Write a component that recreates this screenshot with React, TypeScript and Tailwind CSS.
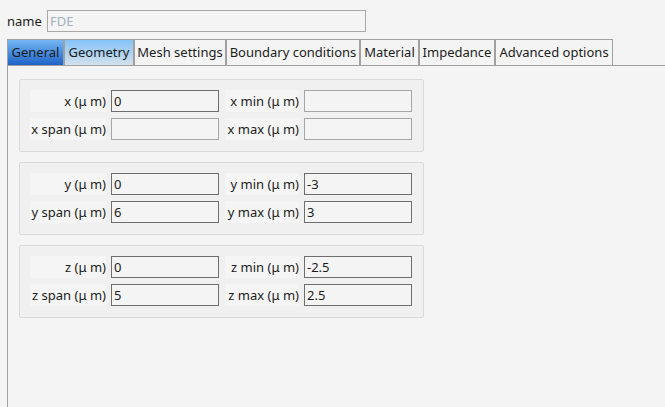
import React from 'react'

const tabs = [
  { name: 'General', w: 'w-[57px]', cls: 'bg-gradient-to-b from-[#74b6f4] to-[#1d63c7]' },
  { name: 'Geometry', w: 'w-[70px]', cls: 'bg-gradient-to-b from-[#84c2f8] to-[#d2e1ec]' },
  { name: 'Mesh settings', w: 'w-[92px]', cls: 'bg-[#f4f4f4]' },
  { name: 'Boundary conditions', w: 'w-[134px]', cls: 'bg-[#f4f4f4]' },
  { name: 'Material', w: 'w-[59px]', cls: 'bg-[#f4f4f4]' },
  { name: 'Impedance', w: 'w-[76px]', cls: 'bg-[#f4f4f4]' },
  { name: 'Advanced options', w: 'w-[118px]', cls: 'bg-[#f4f4f4]' },
]

const groups = [
  { a: 'x', vals: ['', '', '', ''] },
  { a: 'y', vals: ['0', '-3', '6', '3'] },
  { a: 'z', vals: ['0', '-2.5', '5', '2.5'] },
]

const Field = ({ value, dim }: { value: string; dim?: boolean }) => (
  <div
    className={`w-[108px] h-[22px] border bg-[#f4f4f4] px-[2px] leading-[20px] ${
      dim ? 'border-[#a6a6a6]' : 'border-[#6e6e6e]'
    }`}
  >
    {value}
  </div>
)

const Label = ({ text, w }: { text: string; w: string }) => (
  <div className={`${w} h-[22px] bg-[#f5f5f5] text-right leading-[22px] whitespace-nowrap`}>{text}</div>
)

const Group = ({ a, vals, first }: { a: string; vals: string[]; first?: boolean }) => (
  <div className="w-[405px] border border-[#dadada] rounded-[2px] bg-[#f0f0f0] pl-[10px] pr-[11px] pt-[10px] pb-[11px] flex flex-col gap-[6px]">
    <div className="flex items-center">
      <Label text={`${a} (μ m)`} w="w-[76px]" />
      <div className="ml-[5px]">
        <Field value={first ? '0' : vals[0]} />
      </div>
      <div className="ml-[6px]">
        <Label text={`${a} min (μ m)`} w="w-[74px]" />
      </div>
      <div className="ml-[5px]">
        <Field value={vals[1]} dim={first} />
      </div>
    </div>
    <div className="flex items-center">
      <Label text={`${a} span (μ m)`} w="w-[76px]" />
      <div className="ml-[5px]">
        <Field value={vals[2]} dim={first} />
      </div>
      <div className="ml-[6px]">
        <Label text={`${a} max (μ m)`} w="w-[74px]" />
      </div>
      <div className="ml-[5px]">
        <Field value={vals[3]} dim={first} />
      </div>
    </div>
  </div>
)

export default function App() {
  return (
    <div
      className="w-[665px] h-[407px] overflow-hidden bg-[#f4f4f4] text-[13px] text-[#1c1c1c] flex flex-col"
      style={{ fontFamily: '"Noto Sans", "Open Sans", sans-serif' }}
    >
      <div className="flex items-center pl-[7px] pt-[10px] h-[32px]">
        <span className="w-[40px] leading-[22px]">name</span>
        <div className="w-[319px] h-[22px] border border-[#a8a8a8] px-[2px] leading-[20px] text-[#a3b1c2]">FDE</div>
      </div>
      <div className="flex pl-[7px] mt-[7px] h-[26px]">
        {tabs.map((t) => (
          <div
            key={t.name}
            className={`${t.w} ${t.cls} h-[26px] border border-b-0 border-[#a0a0a0] flex items-center justify-center whitespace-nowrap`}
          >
            {t.name}
          </div>
        ))}
      </div>
      <div className="flex-1 ml-[7px] border-t border-l border-[#a0a0a0] pt-[13px] pl-[11px] flex flex-col gap-[10px]">
        {groups.map((g, i) => (
          <Group key={g.a} a={g.a} vals={g.vals} first={i === 0} />
        ))}
      </div>
    </div>
  )
}
